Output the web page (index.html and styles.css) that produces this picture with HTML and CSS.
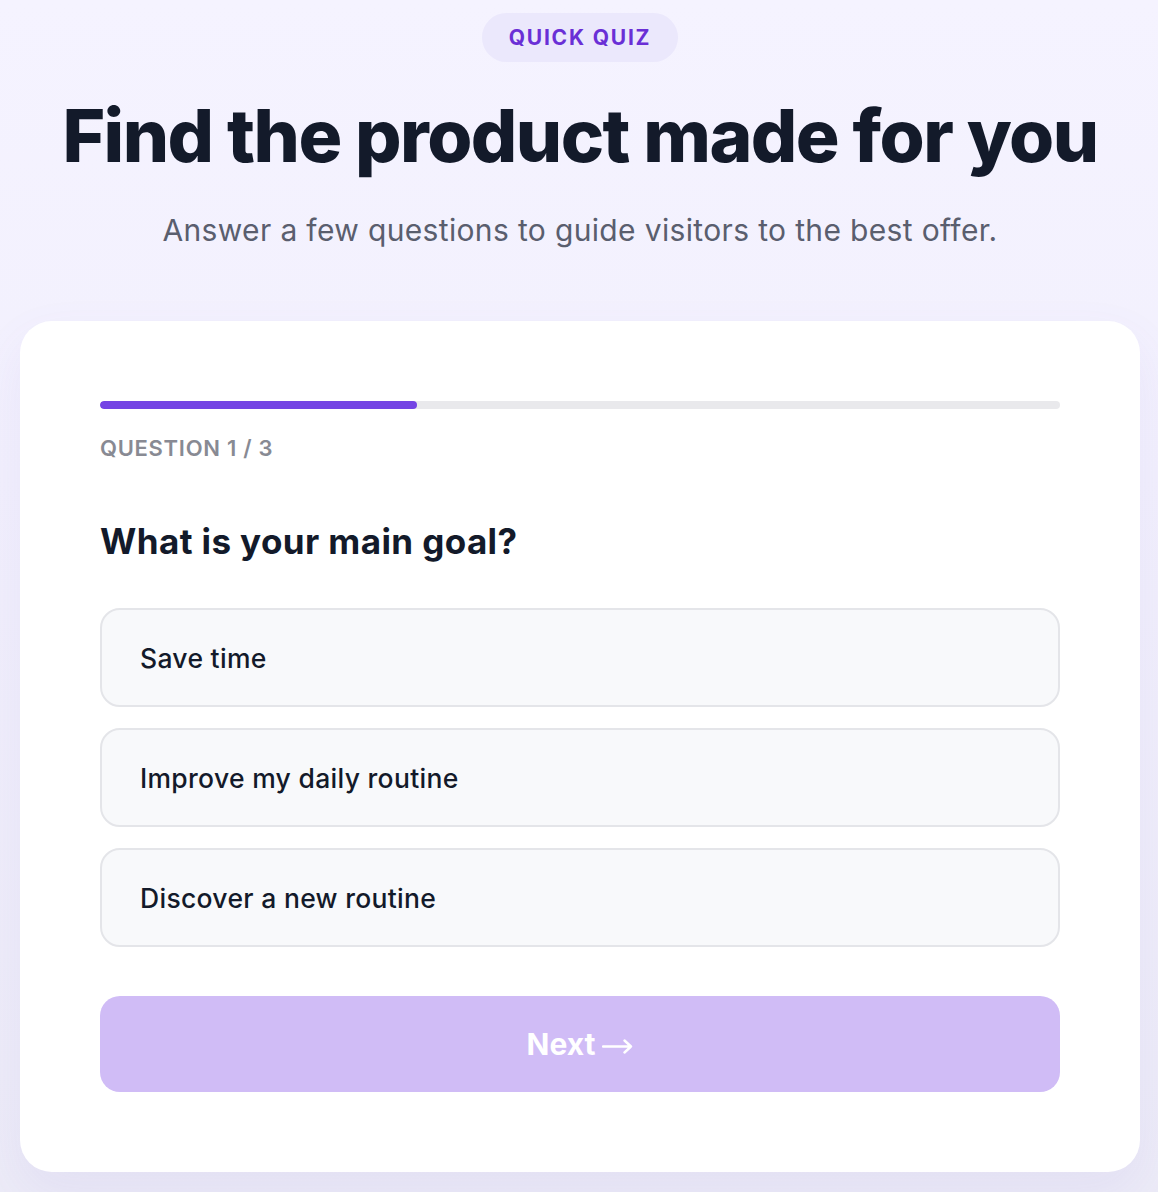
FILE: index.html
```html
<!DOCTYPE html>
<html lang="en">
<head>
<meta charset="utf-8">
<title>Quick Quiz</title>
<link rel="stylesheet" href="styles.css">
</head>
<body>
<main class="page">
  <header class="hero">
    <span class="badge">QUICK QUIZ</span>
    <h1 class="title">Find the product made for you</h1>
    <p class="subtitle">Answer a few questions to guide visitors to the best offer.</p>
  </header>
  <section class="card">
    <div class="progress"><div class="progress-fill" style="width:33%"></div></div>
    <div class="step">QUESTION 1 / 3</div>
    <h2 class="question">What is your main goal?</h2>
    <div class="options">
      <button class="option">Save time</button>
      <button class="option">Improve my daily routine</button>
      <button class="option">Discover a new routine</button>
    </div>
    <button class="next"><span>Next</span><svg class="arrow" width="31" height="16" viewBox="0 0 31 16" aria-hidden="true"><path d="M1 8.5H29M22.5 2.5L29 8.5L22.5 14.5" fill="none" stroke="#ffffff" stroke-width="2.4" stroke-linecap="round" stroke-linejoin="round"/></svg></button>
  </section>
</main>
</body>
</html>
```

FILE: styles.css
```css
* { box-sizing: border-box; }
html, body { margin: 0; padding: 0; }
body {
  font-family: Inter, "Noto Sans", "Liberation Sans", sans-serif;
  background: linear-gradient(180deg, #f5f3ff 0%, #f2f0fd 40%, #ecebf7 100%);
  min-height: 1192px;
  color: #131a2a;
}
.page {
  padding: 13px 18px 0 20px;
  display: flex;
  flex-direction: column;
  align-items: stretch;
}
.hero {
  display: flex;
  flex-direction: column;
  align-items: center;
  text-align: center;
}
.badge {
  display: inline-flex;
  align-items: center;
  justify-content: center;
  width: 196px;
  height: 49px;
  border-radius: 25px;
  background: #ebe8fc;
  color: #6a2fd6;
  font-weight: 700;
  font-size: 21px;
  letter-spacing: 1.8px;
}
.title {
  margin: 30px 0 0;
  font-size: 73px;
  line-height: 88px;
  font-weight: 800;
  letter-spacing: -1.55px;
  color: #131a2a;
}
.subtitle {
  margin: 30px 0 0;
  font-size: 30px;
  line-height: 40px;
  letter-spacing: 0.35px;
  color: #5a5e6e;
}
.card {
  margin-top: 71px;
  background: #ffffff;
  border-radius: 32px;
  padding: 80px 80px 80px;
  box-shadow: 0 20px 50px rgba(110, 90, 200, 0.08);
  width: 1120px;
}
.progress {
  height: 8px;
  border-radius: 4px;
  background: #e9e9ec;
  overflow: hidden;
}
.progress-fill {
  height: 100%;
  border-radius: 4px;
  background: #7444e4;
}
.step {
  margin-top: 25px;
  font-size: 22px;
  line-height: 28px;
  font-weight: 600;
  letter-spacing: 0.7px;
  color: #888a93;
}
.question {
  margin: 57px 0 0;
  font-size: 35px;
  line-height: 44px;
  font-weight: 700;
  letter-spacing: 0.4px;
  color: #131a2a;
}
.options {
  margin-top: 45px;
  display: flex;
  flex-direction: column;
  gap: 21px;
}
.option {
  height: 99px;
  width: 100%;
  border: 2px solid #e4e5e9;
  border-radius: 20px;
  background: #f8f9fb;
  padding: 0 38px;
  text-align: left;
  font-family: inherit;
  font-size: 26.5px;
  font-weight: 500;
  letter-spacing: 0.3px;
  color: #131a2a;
}
.next {
  margin-top: 49px;
  height: 96px;
  width: 100%;
  border: none;
  border-radius: 20px;
  background: #d0bcf6;
  color: #ffffff;
  font-family: inherit;
  font-size: 30px;
  font-weight: 700;
  display: flex;
  align-items: center;
  justify-content: center;
  gap: 7px;
}
.arrow {
  display: block;
  margin-top: 3px;
}
```
